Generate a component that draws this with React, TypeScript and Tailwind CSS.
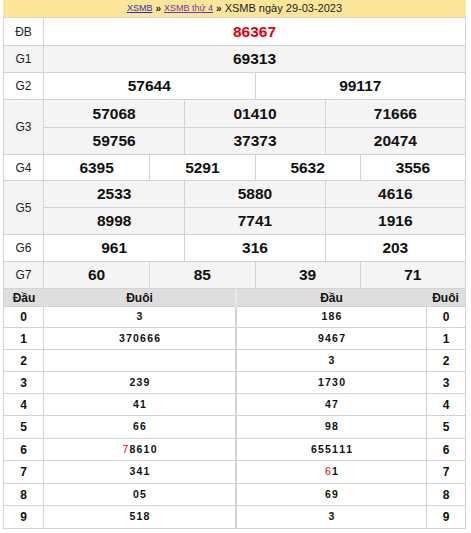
import React from "react"

type Row = { label: string; lines: string[][]; grey?: boolean; red?: boolean; h: string }

const results: Row[] = [
  { label: "ĐB", lines: [["86367"]], red: true, h: "h-[27px]" },
  { label: "G1", lines: [["69313"]], grey: true, h: "h-[26px]" },
  { label: "G2", lines: [["57644", "99117"]], h: "h-[26px]" },
  {
    label: "G3",
    lines: [
      ["57068", "01410", "71666"],
      ["59756", "37373", "20474"],
    ],
    grey: true,
    h: "h-[27px]",
  },
  { label: "G4", lines: [["6395", "5291", "5632", "3556"]], h: "h-[25px]" },
  {
    label: "G5",
    lines: [
      ["2533", "5880", "4616"],
      ["8998", "7741", "1916"],
    ],
    grey: true,
    h: "h-[26px]",
  },
  { label: "G6", lines: [["961", "316", "203"]], h: "h-[26px]" },
  { label: "G7", lines: [["60", "85", "39", "71"]], grey: true, h: "h-[26px]" },
]

const dau = ["3", "370666", "", "239", "41", "66", "78610", "341", "05", "518"]
const duoi = ["186", "9467", "3", "1730", "47", "98", "655111", "61", "69", "3"]

const cols: Record<number, string> = {
  1: "grid-cols-1",
  2: "grid-cols-2",
  3: "grid-cols-3",
  4: "grid-cols-4",
}

function Digits({ value, redFirst }: { value: string; redFirst?: boolean }) {
  return (
    <div className="flex justify-center gap-[1.2px] text-[10.5px] font-bold text-[#111]">
      {value.split("").map((d, i) => (
        <span key={i} className={redFirst && i === 0 ? "font-normal text-[#e00]" : ""}>
          {d}
        </span>
      ))}
    </div>
  )
}

export default function App() {
  return (
    <div className="w-[471px] h-[533px] bg-white pl-[3px] font-['Liberation_Sans',Arial,sans-serif]">
      <div className="w-[463px]">
        <div className="h-[17px] bg-[#fde69c] flex items-center justify-center gap-[3px] text-[11px] text-[#222]">
          <a href="#" className="text-[9px] text-[#2b2bb8] underline">XSMB</a>
          <span className="font-bold text-[10px]">»</span>
          <a href="#" className="text-[9px] text-[#6a3aa8] underline">XSMB thứ 4</a>
          <span className="font-bold text-[10px]">»</span>
          <span>XSMB ngày 29-03-2023</span>
        </div>

        <div className="border border-[#d3d3d3] border-b-0">
          {results.map((r) => (
            <div key={r.label} className={`flex border-b border-[#d3d3d3] ${r.grey ? "bg-[#f4f4f4]" : "bg-white"}`}>
              <div className="w-[40px] shrink-0 border-r border-[#d3d3d3] flex items-center justify-center text-[12px] text-[#222]">
                {r.label}
              </div>
              <div className="flex-1 flex flex-col">
                {r.lines.map((line, li) => (
                  <div
                    key={li}
                    className={`grid ${cols[line.length]} ${li > 0 ? "h-[27px] border-t border-[#d3d3d3]" : r.h}`}
                  >
                    {line.map((n, ni) => (
                      <div
                        key={ni}
                        className={`flex items-center justify-center text-[15.5px] font-bold ${
                          ni > 0 ? "border-l border-[#d3d3d3]" : ""
                        } ${r.red ? "text-[#e0000f]" : "text-[#111]"}`}
                      >
                        {n}
                      </div>
                    ))}
                  </div>
                ))}
              </div>
            </div>
          ))}

          <div className="grid grid-cols-[40px_191px_2px_189px_1fr] h-[18px] bg-[#dedede] border-b border-[#d3d3d3] text-[12px] font-bold text-[#111] items-center text-center">
            <div>Đầu</div>
            <div>Đuôi</div>
            <div className="h-full bg-[#e9e9e9]" />
            <div>Đầu</div>
            <div>Đuôi</div>
          </div>

          {dau.map((d, i) => (
            <div
              key={i}
              className={`grid grid-cols-[40px_191px_2px_189px_1fr] ${i === 0 ? "h-[21px]" : i === 5 || i === 7 || i === 9 ? "h-[23px]" : "h-[22px]"} border-b border-[#d3d3d3] bg-white items-center text-center`}
            >
              <div className="h-full flex items-center justify-center border-r border-[#d3d3d3] text-[12px] font-bold text-[#111]">
                {i}
              </div>
              <Digits value={d} redFirst={i === 6} />
              <div className="h-full bg-[#d3d3d3]" />
              <Digits value={duoi[i]} redFirst={i === 7} />
              <div className="h-full flex items-center justify-center border-l border-[#d3d3d3] text-[12px] font-bold text-[#111]">
                {i}
              </div>
            </div>
          ))}
        </div>
      </div>
    </div>
  )
}
